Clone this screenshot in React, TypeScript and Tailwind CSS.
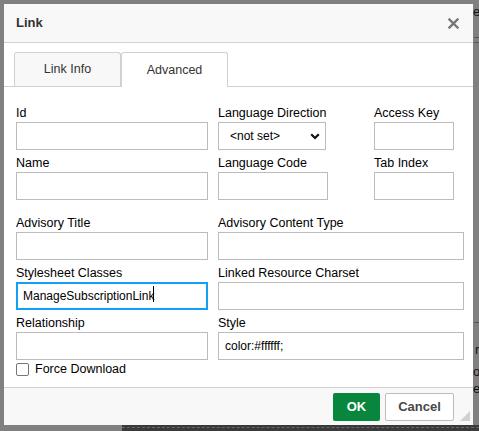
import React from "react";

const font = "font-['Liberation_Sans',Arial,sans-serif]";

const Label: React.FC<{ text: string }> = ({ text }) => (
  <div className="h-[16px] mb-[1px] text-[12.5px] leading-[16px] text-[#000] whitespace-nowrap">
    {text}
  </div>
);

const TextField: React.FC<{
  label: string;
  width: string;
  value?: string;
  focused?: boolean;
}> = ({ label, width, value, focused }) => (
  <div>
    <Label text={label} />
    <input
      type="text"
      defaultValue={value || ""}
      className={`${width} h-[28px] block bg-white text-[12px] text-[#000] outline-none ${
        focused ? "border-2 border-[#139ff7] pl-[5px]" : "border border-[#bcbcbc] pl-[6px]"
      }`}
    />
  </div>
);

const App: React.FC = () => {
  return (
    <div className={`relative w-[479px] h-[431px] overflow-hidden bg-[#808080] ${font}`}>
      {/* page behind the overlay, peeking out at the right edge */}
      <div className="absolute left-[473px] top-[6px] text-[13px] leading-[12px] text-[#111]">es</div>
      <div className="absolute left-[474px] top-[37px] w-[5px] border-t border-dashed border-[#555]" />
      <div className="absolute left-[474px] top-[42px] w-[5px] border-t border-dashed border-[#555]" />
      <div className="absolute left-[474px] top-[322px] w-[5px] border-t border-dashed border-[#555]" />
      <div className="absolute left-[475px] top-[344px] text-[13px] leading-[12px] text-[#111]">r</div>
      <div className="absolute left-[473px] top-[366px] text-[13px] leading-[12px] text-[#111]">or</div>
      <div className="absolute left-[473px] top-[383px] text-[13px] leading-[12px] text-[#111]">es</div>
      <div className="absolute left-[122px] top-[425px] w-[357px] h-[6px] bg-[#3a3a3a]">
        <div className="mt-[2px] border-t border-dashed border-[#666]" />
      </div>

      <div className="pl-[4px] pt-[4px]">
        <div className="relative w-[469px] h-[421px] bg-white flex flex-col">
          {/* Header */}
          <div className="h-[39px] shrink-0 flex items-center justify-between pl-[12px] pr-[14px] bg-[#f8f8f8] border-b border-[#d1d1d1]">
            <span className="text-[13px] font-bold text-[#333]">Link</span>
            <svg width="11" height="11" viewBox="0 0 11 11" className="mt-[1px]">
              <path d="M1.5 1.5 L9.5 9.5 M9.5 1.5 L1.5 9.5" stroke="#777" strokeWidth="2.4" strokeLinecap="square" />
            </svg>
          </div>

          {/* Body */}
          <div className="flex-1">
            {/* Tabs */}
            <div className="mt-[9px] h-[35px] flex items-end pl-[10px] border-b border-[#d1d1d1]">
              <div className="w-[107px] h-[34px] flex items-center justify-center bg-[#f8f8f8] border border-b-0 border-[#d1d1d1] rounded-t-[3px] text-[12.5px] text-[#333]">
                Link Info
              </div>
              <div className="relative -mb-px w-[107px] h-[35px] flex items-center justify-center bg-white border border-b-0 border-[#d1d1d1] rounded-t-[3px] text-[12.5px] text-[#333]">
                Advanced
              </div>
            </div>

            {/* Fields */}
            <div className="pt-[18px] pl-[12px] grid grid-cols-[192px_146px_90px] gap-x-[10px] gap-y-[5px]">
              <TextField label="Id" width="w-[192px]" />
              <div>
                <Label text="Language Direction" />
                <div className="relative w-[108px] h-[28px]">
                  <select className="appearance-none w-full h-full block bg-white border border-[#bcbcbc] pl-[11px] text-[12px] text-[#000] outline-none">
                    <option>&lt;not set&gt;</option>
                    <option>Left to Right (LTR)</option>
                    <option>Right to Left (RTL)</option>
                  </select>
                  <svg
                    width="10"
                    height="7"
                    viewBox="0 0 10 7"
                    className="absolute left-[92px] top-[11px] pointer-events-none"
                  >
                    <path d="M1.2 1.2 L5 5 L8.8 1.2" fill="none" stroke="#111" strokeWidth="2.2" />
                  </svg>
                </div>
              </div>
              <TextField label="Access Key" width="w-[80px]" />

              <TextField label="Name" width="w-[192px]" />
              <TextField label="Language Code" width="w-[110px]" />
              <TextField label="Tab Index" width="w-[80px]" />

              <div className="mt-[10px]">
                <TextField label="Advisory Title" width="w-[192px]" />
              </div>
              <div className="col-span-2 mt-[10px]">
                <TextField label="Advisory Content Type" width="w-[246px]" />
              </div>

              <div className="relative">
                <TextField label="Stylesheet Classes" width="w-[192px]" value="ManageSubscriptionLink" focused />
                <span className="absolute left-[137px] top-[21px] w-px h-[16px] bg-black" />
              </div>
              <div className="col-span-2">
                <TextField label="Linked Resource Charset" width="w-[246px]" />
              </div>

              <TextField label="Relationship" width="w-[192px]" />
              <div className="col-span-2">
                <TextField label="Style" width="w-[246px]" value="color:#ffffff;" />
              </div>
            </div>

            <label className="mt-[1px] ml-[12px] flex items-center gap-[6px] text-[12.5px] leading-[16px] text-[#000]">
              <span className="w-[13px] h-[13px] rounded-[2px] border border-[#767676] bg-white" />
              Force Download
            </label>
          </div>

          {/* Footer */}
          <div className="h-[38px] shrink-0 flex justify-end gap-[5px] pt-[5px] pr-[19px] bg-[#f8f8f8] border-t border-[#d1d1d1]">
            <button className="w-[47px] h-[28px] rounded-[2px] bg-[#09863e] text-white text-[13px] font-bold">
              OK
            </button>
            <button className="w-[69px] h-[28px] rounded-[2px] bg-white border border-[#bcbcbc] text-[#474747] text-[13px] font-bold">
              Cancel
            </button>
          </div>

          {/* resize grip */}
          <svg width="10" height="10" viewBox="0 0 10 10" className="absolute right-[3px] bottom-[4px]">
            <path d="M10 0 L10 10 L0 10 Z" fill="#cfd1cf" />
          </svg>
        </div>
      </div>
    </div>
  );
};

export default App;
